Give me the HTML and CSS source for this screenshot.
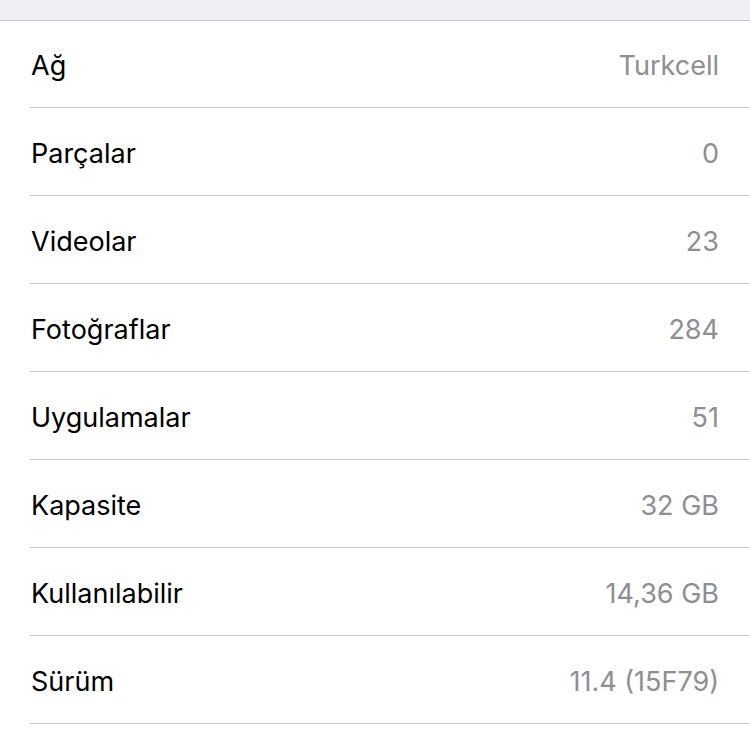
FILE: index.html
```html
<!DOCTYPE html>
<html lang="tr">
<head>
    <meta charset="UTF-8">
    <meta name="viewport" content="width=device-width, initial-scale=1.0">
    <title>Hakkında</title>
    <link rel="stylesheet" href="styles.css">
</head>
<body>
    <div class="top-band"></div>
    <ul class="info-list">
        <li class="row"><span class="label">Ağ</span><span class="value">Turkcell</span></li>
        <li class="row"><span class="label">Parçalar</span><span class="value">0</span></li>
        <li class="row"><span class="label">Videolar</span><span class="value">23</span></li>
        <li class="row"><span class="label">Fotoğraflar</span><span class="value">284</span></li>
        <li class="row"><span class="label">Uygulamalar</span><span class="value">51</span></li>
        <li class="row"><span class="label">Kapasite</span><span class="value">32 GB</span></li>
        <li class="row"><span class="label">Kullanılabilir</span><span class="value">14,36 GB</span></li>
        <li class="row"><span class="label">Sürüm</span><span class="value">11.4 (15F79)</span></li>
    </ul>
</body>
</html>
```

FILE: styles.css
```css
body {
    font-family: Inter, "Liberation Sans", sans-serif;
    background-color: #ffffff;
    margin: 0;
    padding: 0;
}
.top-band {
    height: 20px;
    background-color: #efeff4;
    border-bottom: 1px solid #c8c7cc;
}
.info-list {
    list-style: none;
    margin: 0;
    padding: 0 0 0 30px;
}
.row {
    display: flex;
    justify-content: space-between;
    align-items: center;
    box-sizing: border-box;
    height: 88px;
    padding: 3px 31px 0 1px;
    border-bottom: 1px solid #c8c7cc;
    font-size: 27px;
}
.row:first-child {
    height: 87px;
}
.label {
    color: #000000;
}
.value {
    color: #8e8e93;
}
```
